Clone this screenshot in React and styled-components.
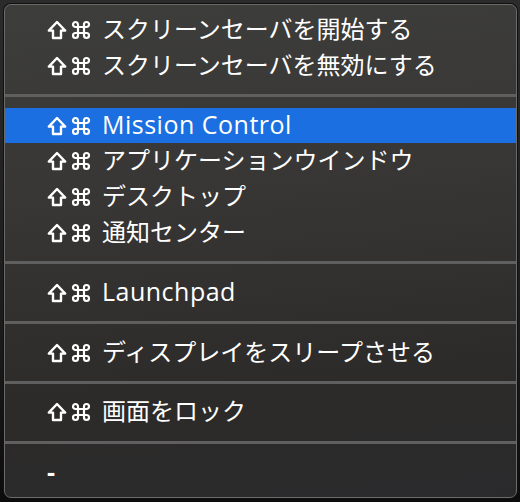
import React from 'react';
import styled, { createGlobalStyle } from 'styled-components';

const GlobalStyle = createGlobalStyle`
  html, body {
    margin: 0;
    padding: 0;
    background: #1f1f1f;
  }
  body {
    font-family: "Open Sans", "Noto Sans CJK JP", sans-serif;
  }
`;

// dark desktop behind the popup
const Screen = styled.div`
  width: 520px;
  height: 502px;
  box-sizing: border-box;
  padding: 4px 3px 4px 4px;
  background: linear-gradient(180deg, #2b2b2b 0%, #1a1a1a 70%, #0c0c0c 100%);
`;

const Menu = styled.div`
  height: 494px;
  box-sizing: border-box;
  display: flex;
  flex-direction: column;
  padding: 7px 0 7px;
  border-radius: 7px;
  border: 1px solid #6a6a6a;
  box-shadow: 0 0 0 1px #111;
  background: linear-gradient(175deg, #3d3d3c 0%, #383735 35%, #2d2b29 75%, #2a2a2c 100%);
  overflow: hidden;
`;

const Item = styled.div`
  height: 36px;
  display: flex;
  align-items: center;
  padding-left: 42px;
  color: #ffffff;
  font-size: 24px;
  white-space: nowrap;
  background: ${(p) => (p.$active ? '#1b6fe0' : 'transparent')};
`;

const Keys = styled.span`
  display: flex;
  align-items: center;
  gap: 4px;
  margin-right: 11px;
`;

const Label = styled.span`
  font-family: "Open Sans", "Noto Sans CJK JP", sans-serif;
  font-size: ${(p) => (p.$latin ? '25px' : '24px')};
  letter-spacing: ${(p) => (p.$latin ? '0.5px' : '0')};
  line-height: 1;
  padding-bottom: 2px;
`;

// the lone "-" entry at the bottom, drawn heavier
const Dash = styled(Label)`
  font-weight: 700;
`;

const Divider = styled.div`
  height: 24px;
  display: flex;
  align-items: center;
  &::after {
    content: '';
    flex: 1;
    height: 3px;
    background: #5f5f5f;
  }
`;

const ShiftIcon = () => (
  <svg width="20" height="20" viewBox="0 0 20 20" fill="none">
    <path
      d="M10 2 L18.2 10.6 H14 V18 H6 V10.6 H1.8 Z"
      stroke="#fff"
      strokeWidth="2.4"
      strokeLinejoin="round"
    />
  </svg>
);

const CmdIcon = () => (
  <svg width="20" height="20" viewBox="0 0 20 20" fill="none">
    <path
      d="M7 4.5 A2.5 2.5 0 1 0 4.5 7 H15.5 A2.5 2.5 0 1 0 13 4.5 V15.5 A2.5 2.5 0 1 0 15.5 13 H4.5 A2.5 2.5 0 1 0 7 15.5 Z"
      stroke="#fff"
      strokeWidth="2.2"
      strokeLinejoin="round"
    />
  </svg>
);

const groups = [
  ['スクリーンセーバを開始する', 'スクリーンセーバを無効にする'],
  ['Mission Control', 'アプリケーションウインドウ', 'デスクトップ', '通知センター'],
  ['Launchpad'],
  ['ディスプレイをスリープさせる'],
  ['画面をロック'],
];

const isLatin = (s) => /^[A-Za-z ]+$/.test(s);

const App = () => {
  return (
    <Screen>
      <GlobalStyle />
      <Menu>
        {groups.map((group, gi) => (
          <React.Fragment key={gi}>
            {group.map((label) => (
              <Item key={label} $active={label === 'Mission Control'}>
                <Keys>
                  <ShiftIcon />
                  <CmdIcon />
                </Keys>
                <Label $latin={isLatin(label)}>{label}</Label>
              </Item>
            ))}
            <Divider />
          </React.Fragment>
        ))}
        <Item>
          <Dash $latin>-</Dash>
        </Item>
      </Menu>
    </Screen>
  );
};

export default App;
